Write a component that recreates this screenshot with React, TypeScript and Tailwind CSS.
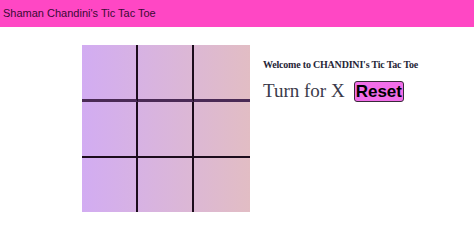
import React, { useState } from 'react';

export default function App() {
    const [board, setBoard] = useState<string[]>(Array(9).fill(''));
    const [turn, setTurn] = useState<'X' | 'O'>('X');

    const handleClick = (i: number) => {
        if (board[i]) return;
        const next = [...board];
        next[i] = turn;
        setBoard(next);
        setTurn(turn === 'X' ? 'O' : 'X');
    };

    const reset = () => {
        setBoard(Array(9).fill(''));
        setTurn('X');
    };

    return (
        <div className="w-[474px] h-[244px] bg-white">
            {/* top bar */}
            <div className="h-[27px] bg-[#ff47c4] flex items-center px-[3px]">
                <span className="text-[11px] text-[#3a0a34]" style={{ fontFamily: '"Liberation Sans", Arial, sans-serif' }}>
                    Shaman Chandini's Tic Tac Toe
                </span>
            </div>

            <div className="flex pl-[82px] pt-[18px]">
                {/* board */}
                <div className="shrink-0 grid grid-cols-3 w-[168px] h-[167px] bg-gradient-to-r from-[#d2acf2] to-[#e2bdc4]">
                    {board.map((cell, i) => (
                        <button
                            key={i}
                            onClick={() => handleClick(i)}
                            className={`flex items-center justify-center text-3xl ${i % 3 !== 2 ? 'border-r-2 border-r-[#1c0c1c]' : ''} ${i < 6 ? (i < 3 ? 'border-b-[3px] border-b-[#4a2a55]' : 'border-b-2 border-b-[#1c0c1c]') : ''}`}
                        >
                            {cell}
                        </button>
                    ))}
                </div>

                {/* info */}
                <div className="ml-[13px] pt-[12px] whitespace-nowrap" style={{ fontFamily: '"Liberation Serif", "Times New Roman", serif' }}>
                    <h1 className="text-[10px] font-bold tracking-[-0.2px] text-[#262637] leading-[16px]">
                        Welcome to CHANDINI's Tic Tac Toe
                    </h1>
                    <div className="flex items-center mt-[6px]">
                        <span className="text-[19px] text-[#3a3a4a] leading-[24px]">Turn for {turn}</span>
                        <button
                            onClick={reset}
                            className="ml-[9px] h-[21px] px-[1px] bg-[#f26ee9] border border-[#3a2a3a] rounded-[3px] text-[17px] font-bold text-black leading-none flex items-center"
                            style={{ fontFamily: '"Liberation Sans", Arial, sans-serif' }}
                        >
                            Reset
                        </button>
                    </div>
                </div>
            </div>
        </div>
    );
}
